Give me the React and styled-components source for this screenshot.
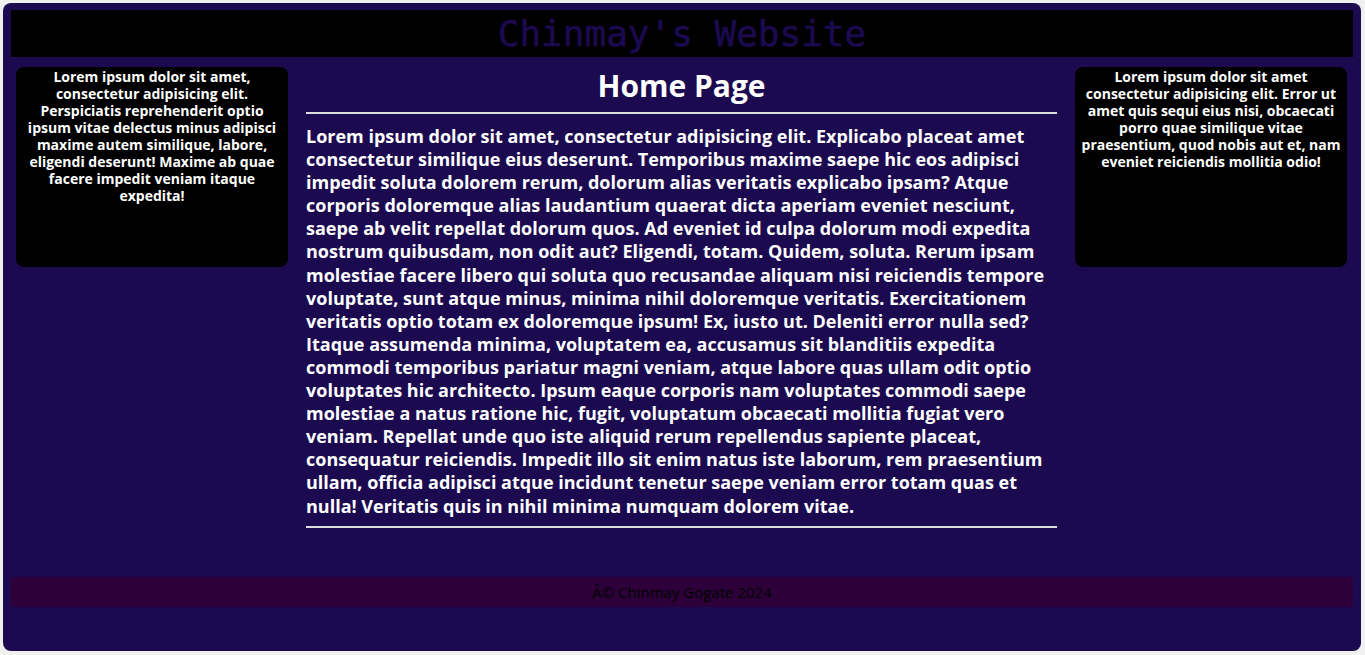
import React from 'react';
import styled, { createGlobalStyle } from 'styled-components';

const GlobalStyle = createGlobalStyle`
  html, body {
    margin: 0;
    padding: 0;
    background: #f0f0f0;
  }
  body {
    padding: 3px 4px 3px 3px;
    font-family: "Trebuchet MS", "Open Sans", "DejaVu Sans", sans-serif;
  }
`;

const Page = styled.div`
  background-color: #1c0a50;
  border-radius: 8px;
  height: 648px;
  padding: 7px 8px 0 8px;
  box-sizing: border-box;
  display: flex;
  flex-direction: column;
`;

const Header = styled.header`
  background-color: #000;
  height: 47px;
  display: flex;
  align-items: center;
  justify-content: center;

  h1 {
    margin: 0;
    font-family: "DejaVu Sans Mono", "Liberation Mono", monospace;
    font-size: 36px;
    font-weight: normal;
    -webkit-text-stroke: 0.6px #1c0a50;
    color: #1c0a50;
  }
`;

const Layout = styled.div`
  display: flex;
  align-items: flex-start;
  gap: 18px;
  padding: 10px 6px 0 5px;
  height: 520px;
  box-sizing: border-box;
`;

const Aside = styled.aside`
  width: 272px;
  flex: none;
  height: 200px;
  box-sizing: border-box;
  background-color: #000;
  border-radius: 8px;
  color: #fff;
  font-weight: bold;
  font-size: 14px;
  line-height: 17px;
  text-align: center;
  padding: 1px 6px;
`;

const Main = styled.main`
  flex: 1;
  color: #fff;

  h2 {
    margin: 0;
    text-align: center;
    font-size: 30px;
    line-height: 36px;
    padding-top: 1px;
  }

  hr {
    border: none;
    border-top: 2px solid #ddd;
    margin: 8px 0 11px 0;
  }

  p {
    margin: 0;
    font-weight: bold;
    font-size: 18px;
    line-height: 23.1px;
  }
`;

const Footer = styled.footer`
  background-color: #2d0039;
  height: 30px;
  display: flex;
  align-items: center;
  justify-content: center;
  color: #000;
  font-size: 15px;
`;

export default function App() {
  return (
    <>
      <GlobalStyle />
      <Page>
        <Header>
          <h1>Chinmay's Website</h1>
        </Header>
        <Layout>
          <Aside>
            Lorem ipsum dolor sit amet, consectetur adipisicing elit.
            Perspiciatis reprehenderit optio ipsum vitae delectus minus
            adipisci maxime autem similique, labore, eligendi deserunt! Maxime
            ab quae facere impedit veniam itaque expedita!
          </Aside>
          <Main>
            <h2>Home Page</h2>
            <hr />
            <p>
              Lorem ipsum dolor sit amet, consectetur adipisicing elit.
              Explicabo placeat amet consectetur similique eius deserunt.
              Temporibus maxime saepe hic eos adipisci impedit soluta dolorem
              rerum, dolorum alias veritatis explicabo ipsam? Atque corporis
              doloremque alias laudantium quaerat dicta aperiam eveniet
              nesciunt, saepe ab velit repellat dolorum quos. Ad eveniet id
              culpa dolorum modi expedita nostrum quibusdam, non odit aut?
              Eligendi, totam. Quidem, soluta. Rerum ipsam molestiae facere
              libero qui soluta quo recusandae aliquam nisi reiciendis tempore
              voluptate, sunt atque minus, minima nihil doloremque veritatis.
              Exercitationem veritatis optio totam ex doloremque ipsum! Ex,
              iusto ut. Deleniti error nulla sed? Itaque assumenda minima,
              voluptatem ea, accusamus sit blanditiis expedita commodi
              temporibus pariatur magni veniam, atque labore quas ullam odit
              optio voluptates hic architecto. Ipsum eaque corporis nam
              voluptates commodi saepe molestiae a natus ratione hic, fugit,
              voluptatum obcaecati mollitia fugiat vero veniam. Repellat unde
              quo iste aliquid rerum repellendus sapiente placeat, consequatur
              reiciendis. Impedit illo sit enim natus iste laborum, rem
              praesentium ullam, officia adipisci atque incidunt tenetur saepe
              veniam error totam quas et nulla! Veritatis quis in nihil minima
              numquam dolorem vitae.
            </p>
            <hr />
          </Main>
          <Aside>
            Lorem ipsum dolor sit amet consectetur adipisicing elit. Error ut
            amet quis sequi eius nisi, obcaecati porro quae similique vitae
            praesentium, quod nobis aut et, nam eveniet reiciendis mollitia
            odio!
          </Aside>
        </Layout>
        <Footer>Â© Chinmay Gogate 2024</Footer>
      </Page>
    </>
  );
}
